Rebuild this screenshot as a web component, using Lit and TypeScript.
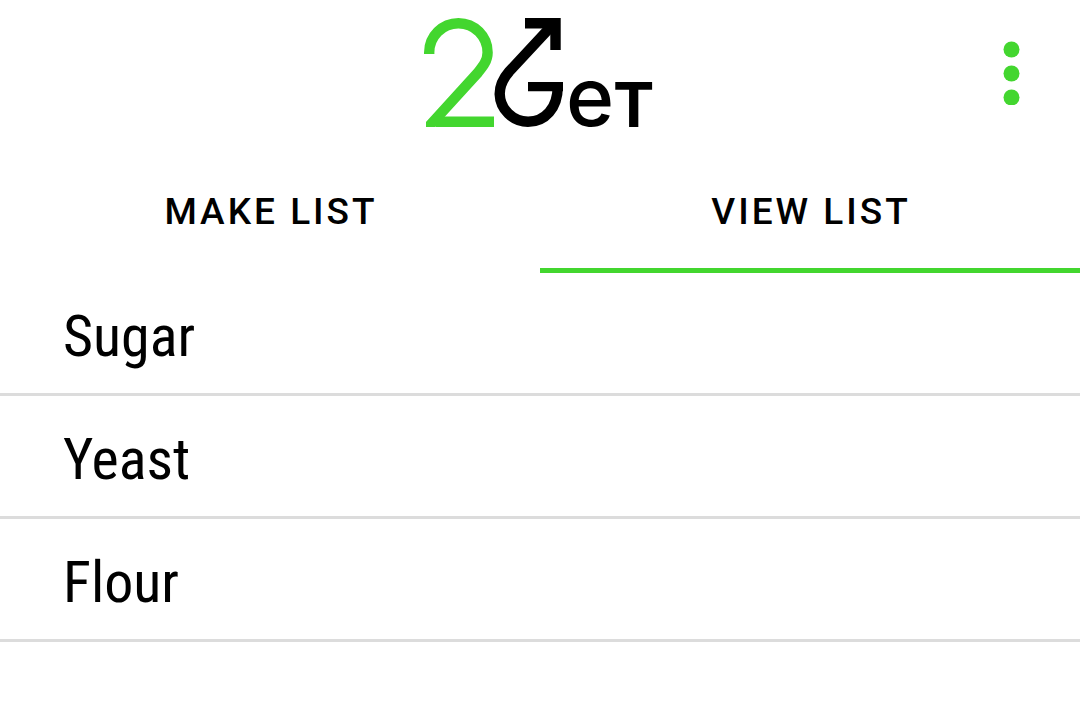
import { LitElement, html, css } from "lit";
import { customElement, state } from "lit/decorators.js";
import { classMap } from "lit/directives/class-map.js";

@customElement("app-root")
export class AppRoot extends LitElement {
  static styles = css`
    :host {
      display: block;
      min-height: 100vh;
      background: #fff;
      color: #000;
      font-family: Roboto, "Liberation Sans", sans-serif;
      --accent: #43d62f;
    }
    .header {
      display: grid;
      grid-template-columns: 1fr auto 1fr;
      align-items: center;
      height: 146px;
      padding: 0 48px;
    }
    .logo {
      grid-column: 2;
      display: block;
      width: 240px;
      height: 118px;
      overflow: visible;
    }
    .accent {
      stroke: var(--accent);
    }
    .ink {
      stroke: #000;
    }
    .letter-e {
      font: 500 82px Inter, sans-serif;
    }
    .letter-t {
      font: 700 62px Inter, sans-serif;
    }
    .menu {
      justify-self: end;
      padding: 0 12px;
      border: 0;
      background: none;
      cursor: pointer;
    }
    .dots {
      display: block;
      width: 17px;
      height: 64px;
      fill: var(--accent);
    }
    .tabs {
      display: flex;
    }
    .tab {
      flex: 1;
      height: 127px;
      padding: 10px 0 0 2px;
      border: 0;
      border-bottom: 5px solid transparent;
      background: none;
      color: inherit;
      font: 500 37px/44px Roboto, sans-serif;
      letter-spacing: 3px;
      text-transform: uppercase;
      cursor: pointer;
    }
    .active {
      border-bottom-color: var(--accent);
    }
    .list {
      margin: 0;
      padding: 0;
      list-style: none;
    }
    .item {
      padding: 29px 63px 23px;
      border-bottom: 3px solid #dcdcdc;
      font: 400 58px/68px "Roboto Condensed", Roboto, sans-serif;
    }
  `;

  @state() private current = "View list";

  private tabs = ["Make list", "View list"];
  private items = ["Sugar", "Yeast", "Flour"];

  render() {
    return html`
      <header class="header">
        <svg class="logo" viewBox="420 14 240 118" role="img" aria-label="2Get">
          <clipPath id="foot"><path d="M426 121L423 118V14H500V127H426Z" /></clipPath>
          <g fill="none" stroke-width="10.4">
            <g class="accent" clip-path="url(#foot)">
              <path d="M429.2 54V52.4A29.2 29.2 0 0 1 487.6 52.4C487.6 61 482.5 67 478 72.5L422 134" />
              <path d="M436 121.8H494" />
            </g>
            <g class="ink">
              <path d="M555 22.2L509.2 71.5C504 77.5 499.7 84 499.7 94A28.8 28.8 0 0 0 528 121.8C545 121.8 557.7 108 557.7 87" />
              <path d="M528 86.6H563" stroke-width="9.2" />
              <path d="M525 23.2H555.5V50" />
            </g>
          </g>
          <text class="letter-e" x="566" y="126">e</text>
          <text class="letter-t" x="613" y="127">T</text>
        </svg>
        <button class="menu" aria-label="More options">
          <svg class="dots" viewBox="0 0 17 64" aria-hidden="true">
            <circle cx="8.5" cy="8.5" r="8" />
            <circle cx="8.5" cy="32.5" r="8" />
            <circle cx="8.5" cy="56.5" r="8" />
          </svg>
        </button>
      </header>
      <nav class="tabs" role="tablist">
        ${this.tabs.map(
          (name) => html`<button
            role="tab"
            aria-selected=${name === this.current}
            class=${classMap({ tab: true, active: name === this.current })}
            @click=${() => (this.current = name)}
          >${name}</button>`
        )}
      </nav>
      <ul class="list">
        ${this.items.map((item) => html`<li class="item">${item}</li>`)}
      </ul>
    `;
  }
}
